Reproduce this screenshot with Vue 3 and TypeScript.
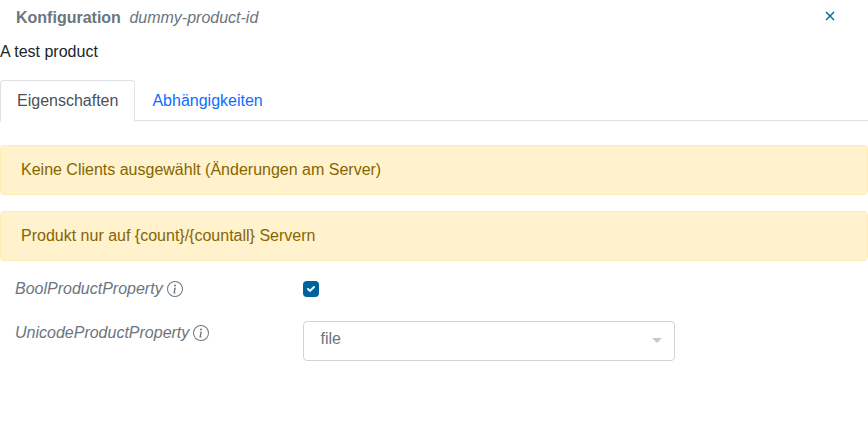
<script setup lang="ts">
import { ref } from 'vue'

interface Tab { id: string; label: string }
const tabs: Tab[] = [
  { id: 'properties', label: 'Eigenschaften' },
  { id: 'dependencies', label: 'Abhängigkeiten' },
]
const activeTab = ref('properties')
const alerts: string[] = [
  'Keine Clients ausgewählt (Änderungen am Server)',
  'Produkt nur auf {count}/{countall} Servern',
]
const enabled = ref(true)
const selected = ref('file')
</script>

<template>
  <section class="panel">
    <header class="header">
      <span class="title">Konfiguration</span>
      <span class="product">dummy-product-id</span>
      <button class="close" type="button" aria-label="Close">
        <svg width="10" height="10" viewBox="0 0 10 10"><path d="M1 1l8 8M9 1L1 9" /></svg>
      </button>
    </header>
    <p class="description">A test product</p>
    <nav class="tabs">
      <button v-for="tab in tabs" :key="tab.id" type="button" class="tab" :class="{ active: tab.id === activeTab }" @click="activeTab = tab.id">{{ tab.label }}</button>
    </nav>
    <div class="alerts">
      <div v-for="alert in alerts" :key="alert" class="alert">{{ alert }}</div>
    </div>
    <div class="row bool-row">
      <div class="label">
        <span>BoolProductProperty</span>
        <svg class="info" viewBox="0 0 16 16"><path d="M8 15A7 7 0 1 1 8 1a7 7 0 0 1 0 14m0 1A8 8 0 1 0 8 0a8 8 0 0 0 0 16" /><path d="m8.930 6.588-2.290.287-.082.380.450.083c.294.070.352.176.288.469l-.738 3.468c-.194.897.105 1.319.808 1.319.545 0 1.178-.252 1.465-.598l.088-.416c-.200.176-.492.246-.686.246-.275 0-.375-.193-.304-.533zM9 4.500a1 1 0 1 1-2 0 1 1 0 0 1 2 0" /></svg>
      </div>
      <button class="checkbox" type="button" role="checkbox" :aria-checked="enabled" @click="enabled = !enabled">
        <svg v-if="enabled" viewBox="0 0 10 10"><path d="M2 5L4 6.900L8 3" /></svg>
      </button>
    </div>
    <div class="row select-row">
      <div class="label">
        <span>UnicodeProductProperty</span>
        <svg class="info" viewBox="0 0 16 16"><path d="M8 15A7 7 0 1 1 8 1a7 7 0 0 1 0 14m0 1A8 8 0 1 0 8 0a8 8 0 0 0 0 16" /><path d="m8.930 6.588-2.290.287-.082.380.450.083c.294.070.352.176.288.469l-.738 3.468c-.194.897.105 1.319.808 1.319.545 0 1.178-.252 1.465-.598l.088-.416c-.200.176-.492.246-.686.246-.275 0-.375-.193-.304-.533zM9 4.500a1 1 0 1 1-2 0 1 1 0 0 1 2 0" /></svg>
      </div>
      <div class="select" role="combobox">
        <span>{{ selected }}</span>
        <svg width="10" height="5" viewBox="0 0 10 5"><path d="M0 0h10L5 5z" /></svg>
      </div>
    </div>
  </section>
</template>

<style scoped>
.panel { width: 100%; height: 423px; overflow: hidden; background: #fff; color: #212529; font-family: "Liberation Sans", Arial, sans-serif; font-size: 16px; line-height: 24px; }
.panel * { box-sizing: border-box; }
.header { display: flex; align-items: center; height: 36px; padding: 0 33px 0 16px; color: #6c757d; }
.title { font-weight: 700; }
.product { margin-left: 8.500px; font-style: italic; }
button { font: inherit; cursor: pointer; }
.close { display: flex; margin: 0 0 4px auto; padding: 0; border: 0; background: none; }
.close path { fill: none; stroke: #00629b; stroke-width: 1.400; }
.description { margin: 4px 0 16px; }
.tabs { display: flex; height: 41px; border-bottom: 1px solid #dee2e6; }
.tab { height: 42px; padding: 8px 16px; border: 1px solid transparent; border-radius: 4px 4px 0 0; background: none; color: #0d6efd; }
.tab.active { background: #fff; border-color: #dee2e6 #dee2e6 #fff; color: #495057; }
.alerts { display: grid; gap: 16px; margin-top: 24px; }
.alert { height: 50px; padding: 12px 20px; border: 1px solid #ffecb5; border-radius: 4px; background: #fff2cd; color: #866600; }
.row { display: grid; grid-template-columns: 288px 372px; padding-left: 15px; color: #6c757d; }
.bool-row { margin-top: 16px; height: 44px; }
.label { display: flex; height: 24px; align-items: center; font-style: italic; gap: 4px; }
.info { width: 16px; height: 16px; fill: currentColor; }
.checkbox { display: flex; align-items: center; justify-content: center; width: 16px; height: 16px; margin-top: 4px; padding: 0; border: 0; border-radius: 4px; background: #00629b; }
.checkbox svg { width: 10px; height: 10px; }
.checkbox path { fill: none; stroke: #fff; stroke-width: 2; stroke-linecap: round; }
.select { display: flex; align-items: center; justify-content: space-between; height: 40px; padding: 0 12.500px 4px 16.500px; border: 1px solid #ced4da; border-radius: 4px; }
.select svg { margin-top: 3px; }
.select path { fill: #c8c8c8; }
</style>

<style>
body { background: #fff; }
</style>
